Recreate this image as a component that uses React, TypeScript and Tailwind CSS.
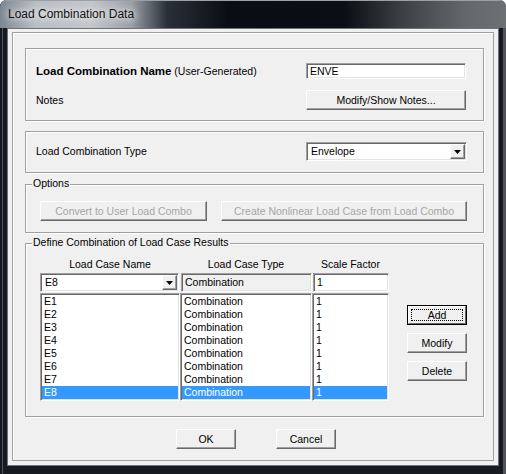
import type { ReactNode } from 'react'

const raised =
  'border border-t-white border-l-white border-b-[#696969] border-r-[#696969] bg-[#f0f0f0] shadow-[inset_-1px_-1px_0_#a0a0a0]'
const sunken =
  'border border-t-[#a0a0a0] border-l-[#a0a0a0] border-b-white border-r-white shadow-[inset_1px_1px_0_#696969,inset_-1px_-1px_0_#e3e3e3]'

const cases = ['E1', 'E2', 'E3', 'E4', 'E5', 'E6', 'E7', 'E8']

function Group({ legend, className, children }: { legend?: string; className: string; children: ReactNode }) {
  return (
    <div
      className={`relative w-[459px] shrink-0 border border-[#a0a0a0] shadow-[inset_1px_1px_0_#fff,1px_1px_0_#fff] ${className}`}
    >
      {legend && (
        <span className="absolute left-[6px] top-[-8px] bg-[#f0f0f0] px-[1px] leading-[13px]">{legend}</span>
      )}
      {children}
    </div>
  )
}

function Button({ children, className, disabled }: { children: ReactNode; className: string; disabled?: boolean }) {
  return (
    <div
      className={`flex items-center justify-center leading-[13px] ${raised} ${disabled ? 'text-[#a6a6a6]' : ''} ${className}`}
    >
      {children}
    </div>
  )
}

function Arrow() {
  return (
    <div className={`mr-[1px] flex h-[15px] w-[15px] shrink-0 items-center justify-center ${raised}`}>
      <svg width="7" height="4" viewBox="0 0 7 4">
        <polygon points="0,0 7,0 3.5,4" fill="#000" />
      </svg>
    </div>
  )
}

function Combo({ value, className }: { value: string; className: string }) {
  return (
    <div className={`flex h-[19px] items-center bg-white pl-[4px] ${sunken} ${className}`}>
      <span className="flex-1 leading-[13px]">{value}</span>
      <Arrow />
    </div>
  )
}

function ListBox({ items, className }: { items: string[]; className: string }) {
  return (
    <div className={`flex h-[108px] flex-col bg-white px-[1px] pt-[1px] ${sunken} ${className}`}>
      {items.map((t, i) => (
        <div
          key={i}
          className={`h-[13px] pl-[2px] leading-[13px] ${i === items.length - 1 ? 'bg-[#3399ff] text-white' : ''}`}
        >
          {t}
        </div>
      ))}
    </div>
  )
}

export default function App() {
  return (
    <div className="flex h-[474px] w-[506px] flex-col overflow-hidden rounded-t-[7px] bg-[#171b21] font-['Liberation_Sans',Arial,sans-serif] text-[10.5px] text-black shadow-[inset_2px_0_0_#14181d,inset_3px_0_0_#50555c,inset_-3px_0_0_#50555c]">
      <div className="flex h-[28px] shrink-0 items-center bg-[linear-gradient(90deg,#7d8791_0%,#b9bec3_7%,#c4c7ca_18%,#9aa0a6_26%,#2a3038_33%,#0a0e14_45%,#0b0f15_68%,#3e4246_80%,#65686b_92%,#6e7174_100%)] pl-[8px] shadow-[inset_0_1px_0_#9aa0a6]">
        <span className="text-[12px] text-[#101010] [text-shadow:0_0_6px_#fff,0_0_10px_#e8ecef]">
          Load Combination Data
        </span>
      </div>

      <div className="flex flex-1 px-[7px] pb-[8px]">
        <div className="flex flex-1 border border-[#6e7378] bg-[#f0f0f0] px-[4px] pb-[4px] pt-[3px]">
          <div className="flex flex-1 flex-col border border-[#a0a0a0] pl-[12px] pt-[15px] shadow-[inset_1px_1px_0_#fff]">
            <Group className="flex h-[73px] flex-col pl-[10px] pr-[17px] pt-[14px]">
              <div className="flex h-[16px] items-center">
                <span className="flex-1 leading-[13px]">
                  <span className="text-[11.5px] font-bold">Load Combination Name</span> (User-Generated)
                </span>
                <div className={`flex h-[16px] w-[160px] items-center bg-white pl-[3px] leading-[13px] ${sunken}`}>ENVE</div>
              </div>
              <div className="mt-[11px] flex h-[20px] items-center">
                <span className="flex-1 leading-[13px]">Notes</span>
                <Button className="h-[20px] w-[160px]">Modify/Show Notes...</Button>
              </div>
            </Group>

            <Group className="mt-[10px] flex h-[42px] items-start pl-[10px] pr-[16px] pt-[10px]">
              <span className="flex h-[19px] flex-1 items-center leading-[13px]">Load Combination Type</span>
              <Combo value="Envelope" className="w-[161px]" />
            </Group>

            <Group legend="Options" className="mt-[11px] flex h-[49px] items-start gap-[14px] pl-[14px] pt-[16px]">
              <Button disabled className="h-[20px] w-[167px]">Convert to User Load Combo</Button>
              <Button disabled className="h-[20px] w-[246px]">Create Nonlinear Load Case from Load Combo</Button>
            </Group>

            <Group
              legend="Define Combination of Load Case Results"
              className="mt-[10px] flex h-[174px] items-start pl-[14px] pt-[14px]"
            >
              <div className="flex w-[349px] flex-col">
                <div className="flex h-[13px] leading-[13px]">
                  <div className="w-[140px] text-center">Load Case Name</div>
                  <div className="w-[132px] text-center">Load Case Type</div>
                  <div className="w-[77px] text-center">Scale Factor</div>
                </div>
                <div className="mt-[2px] flex">
                  <Combo value="E8" className="w-[139px]" />
                  <div className={`ml-[2px] flex h-[19px] w-[131px] items-center bg-[#f0f0f0] pl-[3px] leading-[13px] ${sunken}`}>
                    Combination
                  </div>
                  <div className={`ml-[1px] flex h-[19px] w-[76px] items-center bg-white pl-[3px] leading-[13px] ${sunken}`}>
                    1
                  </div>
                </div>
                <div className="mt-[1px] flex">
                  <ListBox items={cases} className="w-[140px]" />
                  <ListBox items={cases.map(() => 'Combination')} className="w-[132px]" />
                  <ListBox items={cases.map(() => '1')} className="w-[77px]" />
                </div>
              </div>
              <div className="ml-[18px] mt-[47px] flex flex-col gap-[8px]">
                <div className="flex h-[20px] w-[60px] border border-black">
                  <div className="flex flex-1 border border-t-white border-l-white border-b-[#696969] border-r-[#696969] bg-[#f0f0f0] p-[2px]">
                    <div className="flex flex-1 items-center justify-center border border-dotted border-black leading-[13px]">
                      Add
                    </div>
                  </div>
                </div>
                <Button className="h-[20px] w-[60px]">Modify</Button>
                <Button className="h-[20px] w-[60px]">Delete</Button>
              </div>
            </Group>

            <div className="ml-[151px] mt-[12px] flex gap-[40px]">
              <Button className="h-[20px] w-[60px]">OK</Button>
              <Button className="h-[20px] w-[60px]">Cancel</Button>
            </div>
          </div>
        </div>
      </div>
    </div>
  )
}
